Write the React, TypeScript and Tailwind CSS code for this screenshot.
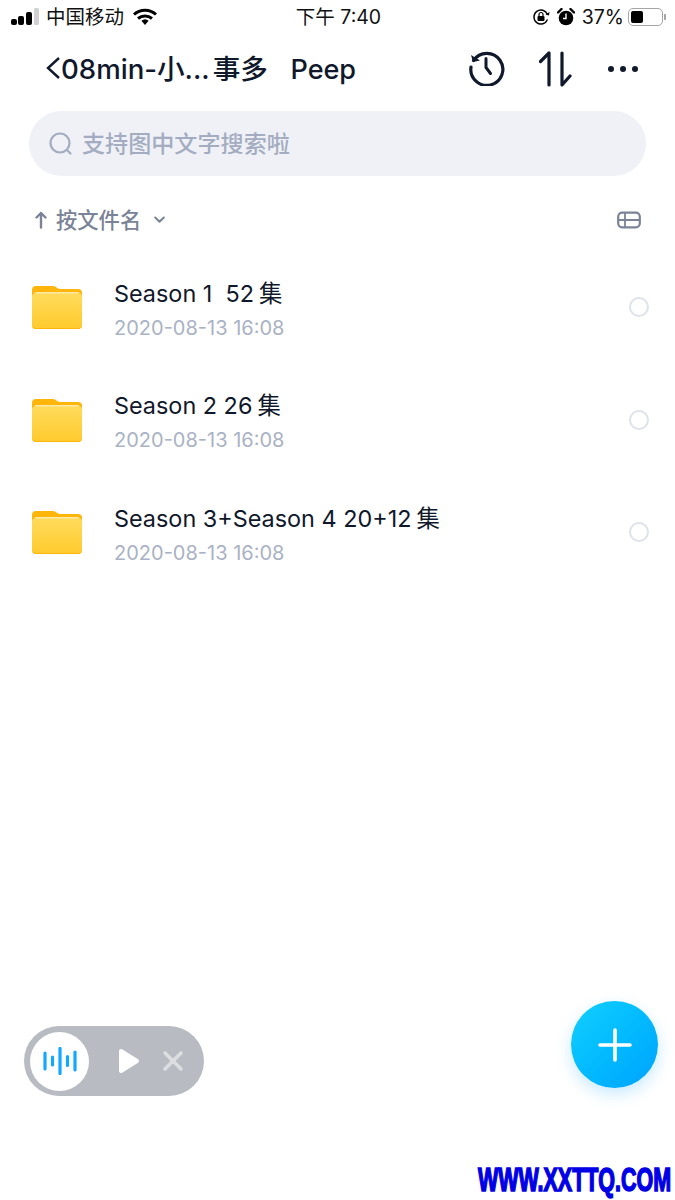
const sans = "font-['Inter','Noto_Sans_CJK_SC',sans-serif]";

function Folder() {
  return (
    <svg width="50" height="46" viewBox="0 0 50 46" className="shrink-0">
      <defs>
        <linearGradient id="fb" x1="0" y1="0" x2="0" y2="1">
          <stop offset="0" stopColor="#ffdb5c" />
          <stop offset="1" stopColor="#ffca2c" />
        </linearGradient>
      </defs>
      <path d="M0 6a4 4 0 0 1 4-4h17c3 0 4 3 7 3h18a4 4 0 0 1 4 4v10H0z" fill="#ffb50a" />
      <rect x="0" y="9" width="50" height="36" rx="4" fill="url(#fb)" />
      <rect x="3" y="8" width="44" height="1.6" rx="0.8" fill="#ffe9a6" />
      <path d="M0 40a4 4 0 0 0 4 5h42a4 4 0 0 0 4-5v1a4 4 0 0 1-4 3H4a4 4 0 0 1-4-3z" fill="#ffb50a" />
    </svg>
  );
}

function Row({ name }: { name: string }) {
  return (
    <div className="flex h-[112.5px] items-center pl-[32px] pr-[26px]">
      <Folder />
      <div className="ml-[32px] flex-1 pt-[4px]">
        <div className="whitespace-pre text-[23.4px] leading-[32px] text-[#10182b]">
          {name}
          <span className="ml-[5px]">集</span>
        </div>
        <div className="mt-[5px] text-[20px] leading-[26px] text-[#aab2c5]">2020-08-13 16:08</div>
      </div>
      <div className="h-[20px] w-[20px] rounded-full border-[2.5px] border-[#dfe2ea]" />
    </div>
  );
}

export default function App() {
  return (
    <div className={`relative h-[1200px] w-[675px] overflow-hidden bg-white ${sans}`}>
      {/* status bar */}
      <div className="flex h-[34px] items-center justify-between pl-[11px] pr-[9px] text-[#111]">
        <div className="flex w-[240px] items-center">
          <svg width="28" height="18" viewBox="0 0 28 18">
            <rect x="0" y="11" width="6" height="6" rx="2" fill="#000" />
            <rect x="7" y="8" width="6" height="9" rx="2" fill="#000" />
            <rect x="15" y="4" width="6" height="13" rx="2" fill="#000" />
            <rect x="23" y="0" width="5" height="17" rx="1.5" fill="#d0d0d0" />
          </svg>
          <span className="ml-[7px] text-[19.5px] leading-[24px]">中国移动</span>
          <svg width="26" height="18" viewBox="0 0 26 18" className="ml-[8px]">
            <path d="M13 17l-3.600-4.200a5.500 5.500 0 0 1 7.200 0z" fill="#000" />
            <path d="M2 6.500a16.500 16.500 0 0 1 22 0M6 10.500a11 11 0 0 1 14 0" fill="none" stroke="#000" strokeWidth="3" />
          </svg>
        </div>
        <div className="text-[19.5px] leading-[24px]">下午 7:40</div>
        <div className="flex w-[240px] items-center justify-end">
          <svg width="18" height="18" viewBox="0 0 18 18" className="mr-[7px]">
            <path d="M15.500 11.500a7 7 0 1 1 0-5" fill="none" stroke="#000" strokeWidth="1.400" />
            <path d="M13.500 6.500l3.500 1 .5-3.500z" fill="#000" />
            <rect x="5.500" y="8" width="7" height="5" rx="1" fill="#000" />
            <path d="M7 8V6.500a2 2 0 0 1 4 0V8" fill="none" stroke="#000" strokeWidth="1.200" />
          </svg>
          <svg width="18" height="18" viewBox="0 0 18 18" className="mr-[7px]">
            <circle cx="9" cy="10" r="7.300" fill="#000" />
            <path d="M1 4.500L4.500 1M13.500 1L17 4.500" stroke="#000" strokeWidth="2.400" strokeLinecap="round" />
            <path d="M9 5.500V10.500h-3" fill="none" stroke="#fff" strokeWidth="1.400" />
          </svg>
          <span className="text-[19.5px] leading-[24px]">37%</span>
          <div className="ml-[4px] flex h-[18px] w-[35px] items-center rounded-[5px] border-[1.5px] border-[#a5a5a5] p-[2px]">
            <div className="h-full w-[12px] rounded-[2px] bg-black" />
          </div>
          <div className="ml-[1px] h-[6px] w-[2px] rounded-r-[1px] bg-[#a5a5a5]" />
        </div>
      </div>

      {/* header */}
      <div className="flex h-[70px] items-center pl-[45px] pr-[37px] text-[#10182b]">
        <svg width="16" height="26" viewBox="0 0 16 26" className="mb-[3px] shrink-0">
          <path d="M14 3L3 13l11 10" fill="none" stroke="#10182b" strokeWidth="2.400" />
        </svg>
        <div className="whitespace-pre text-[27.6px] font-medium leading-[36px]">
          08min-小...<span className="ml-[3px]">事多</span>
          <span className="ml-[1px] text-[27px]">   Peep</span>
        </div>
        <div className="ml-auto flex items-center">
          <svg width="38" height="38" viewBox="0 0 38 38" className="-translate-y-[2px]">
            <path d="M5.500 12.500A16 16 0 1 1 3 19" fill="none" stroke="#10182b" strokeWidth="3.200" strokeLinecap="round" />
            <path d="M3 7l2 7 7-1.500z" fill="#10182b" />
            <path d="M18 10.500v9l4.500 6" fill="none" stroke="#10182b" strokeWidth="3" strokeLinecap="round" />
          </svg>
          <svg width="34" height="36" viewBox="0 0 34 36" className="ml-[33px]">
            <path d="M1.500 10.500L10 2v32M23 2v32l8-9" fill="none" stroke="#10182b" strokeWidth="3.200" strokeLinecap="round" strokeLinejoin="round" />
          </svg>
          <div className="ml-[35px] flex gap-[6px]">
            <div className="h-[6px] w-[6px] rounded-full bg-[#10182b]" />
            <div className="h-[6px] w-[6px] rounded-full bg-[#10182b]" />
            <div className="h-[6px] w-[6px] rounded-full bg-[#10182b]" />
          </div>
        </div>
      </div>

      {/* search */}
      <div className="mx-[29px] mt-[7px] flex h-[65px] w-[617px] items-center rounded-[32.5px] bg-[#eff1f7] pl-[20px]">
        <svg width="24" height="24" viewBox="0 0 24 24">
          <circle cx="11" cy="11" r="9.500" fill="none" stroke="#a3acc0" strokeWidth="2.200" />
          <path d="M18 18l3.500 3.500" stroke="#a3acc0" strokeWidth="2.200" strokeLinecap="round" />
        </svg>
        <span className="ml-[9px] text-[23.1px] font-medium leading-[30px] text-[#a3acc0]">支持图中文字搜索啦</span>
      </div>

      {/* sort */}
      <div className="flex h-[88px] items-center pl-[35px] pr-[34px] text-[#7b8396]">
        <svg width="12" height="18" viewBox="0 0 12 18">
          <path d="M6 16.500V2M1.500 6.500L6 2l4.500 4.500" fill="none" stroke="#7b8396" strokeWidth="2.400" strokeLinecap="round" strokeLinejoin="round" />
        </svg>
        <span className="ml-[9px] text-[21.3px] font-medium leading-[28px]">按文件名</span>
        <svg width="11" height="8" viewBox="0 0 11 8" className="ml-[13px]">
          <path d="M1.200 1.500L5.500 5.800l4.300-4.300" fill="none" stroke="#7b8396" strokeWidth="2" strokeLinecap="round" strokeLinejoin="round" />
        </svg>
        <svg width="24" height="18" viewBox="0 0 24 18" className="ml-auto">
          <rect x="1.200" y="1.700" width="21.600" height="14.600" rx="4" fill="none" stroke="#7b8396" strokeWidth="2.200" />
          <path d="M1.500 9h21M8 2v14" stroke="#7b8396" strokeWidth="1.800" />
        </svg>
      </div>

      {/* list */}
      <div className="-mt-[13px]">
        <Row name="Season 1  52" />
        <Row name="Season 2 26" />
        <Row name="Season 3+Season 4 20+12" />
      </div>

      {/* audio pill */}
      <div className="absolute left-[24px] top-[1026px] flex h-[70px] w-[180px] items-center rounded-[35px] bg-[#b8bcc2] pl-[6px]">
        <div className="flex h-[59px] w-[59px] items-center justify-center rounded-full bg-white">
          <svg width="34" height="28" viewBox="0 0 34 28">
            <path d="M2 6v16M9.500 10v8M17 1.500v25M24.500 9.500v9M32 5v18" stroke="#14a7ff" strokeWidth="3.200" strokeLinecap="round" />
          </svg>
        </div>
        <svg width="22" height="26" viewBox="0 0 22 26" className="ml-[29px]">
          <path d="M3 3l16 10L3 23z" fill="#fff" stroke="#fff" strokeWidth="4" strokeLinejoin="round" />
        </svg>
        <svg width="22" height="22" viewBox="0 0 22 22" className="ml-[22px]">
          <path d="M3 3l16 16M19 3L3 19" stroke="#dcdee0" strokeWidth="3.600" strokeLinecap="round" />
        </svg>
      </div>

      {/* FAB */}
      <div className="absolute left-[571px] top-[1001px] flex h-[87px] w-[87px] items-center justify-center rounded-full bg-gradient-to-br from-[#12d0ff] to-[#00a3ff] shadow-[0_6px_16px_rgba(0,160,255,0.22)]">
        <svg width="34" height="34" viewBox="0 0 34 34">
          <path d="M17 2v30M2 17h30" stroke="#fff" strokeWidth="3.600" strokeLinecap="round" />
        </svg>
      </div>

      {/* watermark */}
      <div className="absolute left-[478px] top-[1161px] origin-left scale-x-[0.65] whitespace-nowrap font-['Liberation_Sans'] text-[33px] font-bold leading-[38px] text-[#0000e6] [-webkit-text-stroke:1.6px_#0000e6]">
        WWW.XXTTQ.COM
      </div>
    </div>
  );
}
